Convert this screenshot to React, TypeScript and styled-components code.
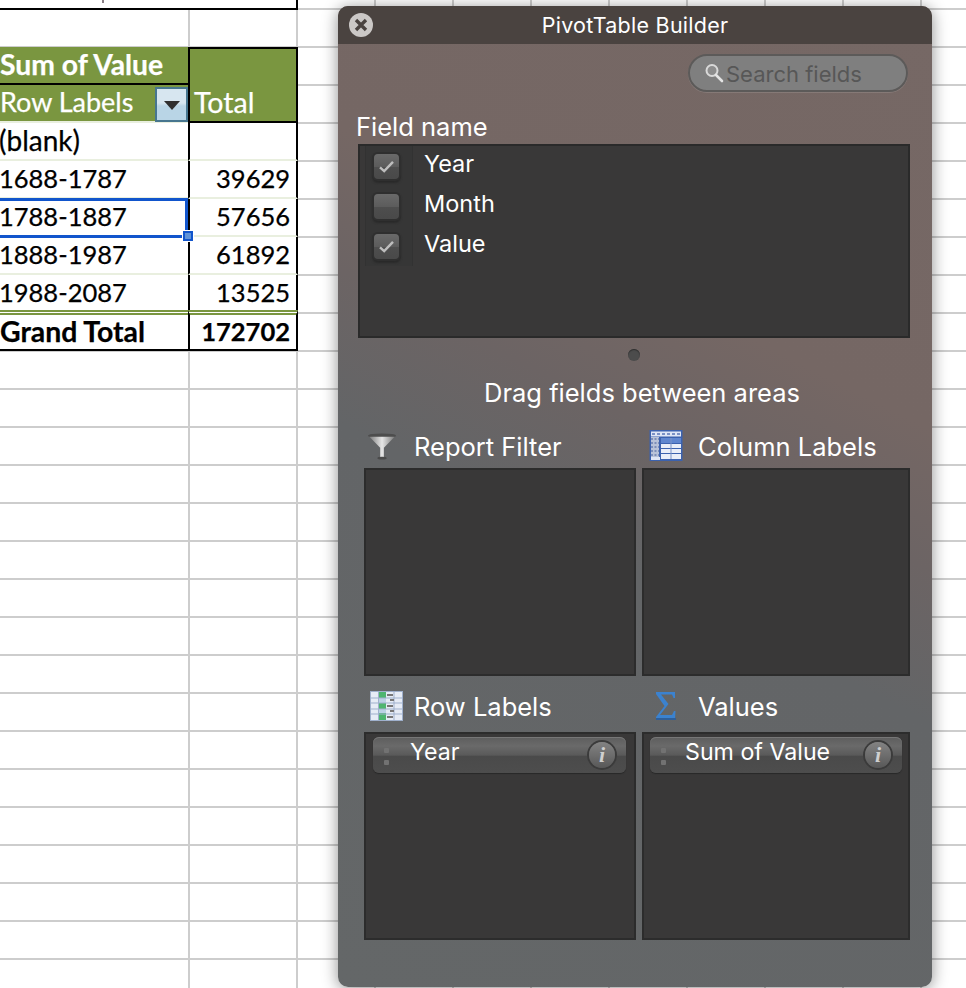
import React from "react";
import styled, { createGlobalStyle } from "styled-components";

const Global = createGlobalStyle`
  html, body { margin: 0; padding: 0; background: #fff; }
  body { width: 966px; height: 988px; overflow: hidden; }
  * { box-sizing: border-box; }
`;

const Sheet = styled.div`
  position: relative;
  width: 966px;
  height: 988px;
  overflow: hidden;
  display: flex;
  align-items: flex-start;
  background-color: #fff;
  background-image:
    linear-gradient(#cdcdcd, #cdcdcd),
    linear-gradient(#cdcdcd, #cdcdcd),
    linear-gradient(to bottom, #cdcdcd 0 2px, transparent 2px);
  background-size: 2px 100%, 2px 100%, 100% 38px;
  background-position: 188px 0, 296px 0, 0 8px;
  background-repeat: no-repeat, no-repeat, repeat-y;
  font-family: "Lato", "Liberation Sans", sans-serif;
  &::before {
    content: "";
    position: absolute;
    left: 374px;
    right: 0;
    top: 0;
    height: 100%;
    background: linear-gradient(to right, #cdcdcd 0 2px, transparent 2px) 0 0 / 78px 100% repeat-x;
  }
`;

const Cells = styled.div`
  position: relative;
  width: 298px;
  flex: none;
  display: flex;
  flex-direction: column;
`;

const CutOffTable = styled.div`
  height: 10px;
  margin-bottom: 37px;
  background: #fff;
  border-right: 2px solid #000;
  border-bottom: 2px solid #000;
  padding-left: 102px;
`;

const Descender = styled.div`
  width: 2px;
  height: 3px;
  background: #8a7f86;
`;

const Row = styled.div<{ $total?: boolean }>`
  display: grid;
  grid-template-columns: 188px 110px;
  height: ${(p) => (p.$total ? "41px" : "38px")};
  margin-top: ${(p) => (p.$total ? "-3px" : "0")};
  font-size: 25.5px;
  color: #000;
  -webkit-text-stroke: 0.25px currentColor;
`;

const Letters = styled.span<{ $size: number }>`
  font-size: ${(p) => p.$size}px;
`;

const LabelCell = styled.div<{ $tone?: "head" | "title" | "total" | "plain"; $selected?: boolean }>`
  position: relative;
  z-index: ${(p) => (p.$selected ? 2 : 0)};
  white-space: nowrap;
  text-indent: ${(p) => (p.$tone === "plain" ? "-1px" : "0")};
  background: ${(p) => (p.$tone === "head" || p.$tone === "title" ? "#7a9640" : "#fff")};
  color: ${(p) => (p.$tone === "head" || p.$tone === "title" ? "#fff" : "#000")};
  font-weight: ${(p) => (p.$tone === "title" || p.$tone === "total" ? 700 : 400)};
  border-bottom: ${(p) =>
    p.$tone === "title" || p.$tone === "total" ? "2px solid #000" : "2px solid #e9efdf"};
  border-top: ${(p) => (p.$tone === "total" ? "5px double #7a9640" : "none")};
  line-height: ${(p) => (p.$tone === "total" ? "32px" : p.$tone === "plain" ? "35px" : "34px")};
`;

const ValueCell = styled.div<{ $tone?: "head" | "headTop" | "total" | "plain" }>`
  text-align: ${(p) => (p.$tone === "head" ? "left" : "right")};
  padding: ${(p) => (p.$tone === "head" ? "0 0 0 4px" : "0 6px 0 0")};
  border-left: 2px solid #000;
  border-right: 2px solid #000;
  background: ${(p) => (p.$tone === "head" || p.$tone === "headTop" ? "#7a9640" : "#fff")};
  color: ${(p) => (p.$tone === "head" ? "#fff" : "#000")};
  font-weight: ${(p) => (p.$tone === "total" ? 700 : 400)};
  border-top: ${(p) =>
    p.$tone === "headTop" ? "2px solid #000" : p.$tone === "total" ? "5px double #7a9640" : "none"};
  border-bottom: ${(p) =>
    p.$tone === "head" || p.$tone === "total"
      ? "2px solid #000"
      : p.$tone === "headTop"
      ? "none"
      : "2px solid #e9efdf"};
  line-height: ${(p) => (p.$tone === "total" ? "32px" : p.$tone === "head" ? "34px" : "35px")};
`;

const FilterButton = styled.div`
  position: absolute;
  right: 0;
  top: 2px;
  width: 33px;
  height: 35px;
  border: 2px solid #47768f;
  background: linear-gradient(#d7e6f0 0 45%, #b9d5e6 55%);
  display: flex;
  align-items: center;
  justify-content: center;
`;

const Arrow = styled.span`
  width: 0;
  height: 0;
  margin-top: 2px;
  border-left: 8px solid transparent;
  border-right: 8px solid transparent;
  border-top: 9px solid #2f2f2f;
`;

const Selection = styled.div`
  position: absolute;
  left: -4px;
  right: 0;
  top: -1px;
  height: 40px;
  border: 3px solid #1155cc;
  pointer-events: none;
`;

const Handle = styled.div`
  position: absolute;
  right: -8px;
  bottom: -6px;
  width: 10px;
  height: 10px;
  background: #5e93d8;
  border: 2px solid #1155cc;
  outline: 1px solid #fff;
`;

const Win = styled.section`
  position: relative;
  width: 594px;
  height: 981px;
  margin: 6px 0 0 40px;
  flex: none;
  border-radius: 10px;
  overflow: hidden;
  display: flex;
  flex-direction: column;
  box-shadow: 0 2px 16px rgba(0, 0, 0, 0.45);
  background: linear-gradient(207deg, #766865 0%, #756764 33%, #6c6464 44%, #636567 56%, #646768 100%);
  font-family: "Inter", "Liberation Sans", sans-serif;
  color: #fff;
`;

const TitleBar = styled.header`
  position: relative;
  flex: none;
  height: 38px;
  background: #4a4340;
  display: flex;
  align-items: center;
  justify-content: center;
  font-size: 21.5px;
  letter-spacing: 0.25px;
`;

const CloseBtn = styled.div`
  position: absolute;
  left: 11px;
  top: 7px;
  width: 24px;
  height: 24px;
  border-radius: 50%;
  background: #cbc8c6;
  display: flex;
  align-items: center;
  justify-content: center;
`;

const Body = styled.div`
  flex: 1;
  display: flex;
  flex-direction: column;
  padding: 10px 22px 0 20px;
`;

const SearchRow = styled.div`
  display: flex;
  justify-content: flex-end;
  height: 38px;
  margin-right: 2px;
`;

const Search = styled.div`
  width: 220px;
  height: 38px;
  border-radius: 19px;
  background: #7f7f7f;
  border: 2px solid #5c5a59;
  box-shadow: 0 1px 0 rgba(255, 255, 255, 0.12);
  display: flex;
  align-items: center;
  padding-left: 14px;
  gap: 2px;
  font-size: 22px;
  color: #575757;
`;

const SearchText = styled.span`
  margin-top: 1px;
`;

const FieldTitle = styled.div`
  margin-top: 20px;
  height: 32px;
  line-height: 30px;
  font-size: 25.5px;
  margin-left: -2px;
`;

const FieldList = styled.div`
  height: 194px;
  background: #393838;
  border: 2px solid #2a2a2a;
  padding: 0 0 0 5px;
`;

const FieldInner = styled.div`
  display: flex;
  flex-direction: column;
`;

const FieldRow = styled.div`
  display: flex;
  align-items: center;
  height: 40px;
  font-size: 23.5px;
`;

const FieldName = styled.span`
  padding-bottom: 6px;
`;

const CheckCell = styled.div`
  width: 48px;
  height: 40px;
  flex: none;
  padding-right: 6px;
  background: #363636;
  border-left: 1px solid #323232;
  border-right: 1px solid #323232;
  display: flex;
  align-items: center;
  justify-content: center;
  margin-right: 11px;
`;

const Check = styled.div`
  width: 25px;
  height: 25px;
  border-radius: 4px;
  background: linear-gradient(#6a6a6a 0%, #5c5c5c 50%, #4e4e4e 52%, #494949 100%);
  box-shadow: 0 0 0 2px #2f2f2f, 0 2px 2px 2px #2a2a2a;
  display: flex;
  align-items: center;
  justify-content: center;
`;

const Dot = styled.div`
  width: 12px;
  height: 12px;
  border-radius: 50%;
  align-self: center;
  margin: 11px 0 0 0;
  background: #4c4c4c;
  box-shadow: inset 0 1px 1px #2e2e2e;
`;

const DragHint = styled.div`
  margin-top: 17px;
  height: 30px;
  text-align: center;
  line-height: 30px;
  font-size: 25.5px;
  margin-right: -16px;
  white-space: nowrap;
`;

const Areas = styled.div`
  display: grid;
  grid-template-columns: 272px 268px;
  column-gap: 6px;
  margin: 20px 0 0 6px;
`;

const Area = styled.div`
  display: flex;
  flex-direction: column;
`;

const AreaHead = styled.div<{ $lower?: boolean }>`
  height: 38px;
  padding-bottom: 2px;
  display: flex;
  align-items: center;
  font-size: 25.5px;
  margin-top: ${(p) => (p.$lower ? "12px" : "0")};
  margin-bottom: ${(p) => (p.$lower ? "6px" : "2px")};
`;

const IconSlot = styled.div<{ $w: number; $pad: number }>`
  width: ${(p) => p.$w}px;
  flex: none;
  display: flex;
  align-items: center;
  padding-left: ${(p) => p.$pad}px;
  margin-top: -1px;
`;

const Drop = styled.div<{ $inset?: number }>`
  height: 208px;
  background: #393838;
  border: 2px solid #2c2c2c;
  padding: 3px ${(p) => p.$inset ?? 8}px 0 ${(p) => p.$inset ?? 7}px;
`;

const Pill = styled.div`
  height: 36px;
  border-radius: 6px;
  background: linear-gradient(#5d5d5d 0%, #6a6a6a 25%, #5a5a5a 50%, #4a4a4a 54%, #4d4d4d 100%);
  box-shadow: 0 1px 1px #282828, inset 0 1px 0 #777;
  display: flex;
  align-items: center;
  font-size: 23.2px;
  padding-right: 11px;
`;

const Grip = styled.div<{ $w: number }>`
  width: ${(p) => p.$w}px;
  flex: none;
  display: flex;
  flex-direction: column;
  gap: 7px;
  padding-left: 11px;
  margin-top: 2px;
  & > i {
    display: block;
    width: 5px;
    height: 5px;
    border-radius: 1px;
    background: #727272;
  }
`;

const PillText = styled.span`
  flex: 1;
  margin-top: -7px;
`;

const Info = styled.div`
  width: 26px;
  height: 26px;
  border-radius: 50%;
  background: linear-gradient(#838383, #585858);
  box-shadow: 0 0 0 2px #3b3b3b;
  display: flex;
  align-items: center;
  justify-content: center;
  font-family: "Liberation Serif", serif;
  font-style: italic;
  font-weight: 700;
  font-size: 22px;
  line-height: 1;
  color: #cfcfcf;
`;

const Tick = () => (
  <svg width="17" height="13" viewBox="0 0 18 14" fill="none">
    <path d="M2 8l4.500 4L16 2" stroke="#bdbdbd" strokeWidth="2.600" />
  </svg>
);

const Funnel = () => (
  <svg width="31" height="28" viewBox="0 0 32 30">
    <defs>
      <linearGradient id="fn" x1="0" x2="1">
        <stop offset="0" stopColor="#7d7d7d" />
        <stop offset="0.5" stopColor="#e6e6e6" />
        <stop offset="1" stopColor="#7b7b7b" />
      </linearGradient>
    </defs>
    <ellipse cx="15.500" cy="4" rx="15" ry="2.500" fill="#4d4d4d" />
    <path d="M2 5h27L17.500 17v10h-4V17z" fill="url(#fn)" />
    <ellipse cx="15.500" cy="28" rx="5" ry="1.500" fill="#4a4a4a" />
  </svg>
);

const ColumnIcon = () => (
  <svg width="34" height="33" viewBox="0 0 34 33">
    <rect x="0.500" y="1" width="33" height="31" fill="#3c62ae" />
    <rect x="2" y="2.500" width="30" height="5" fill="#dfe6f5" />
    <rect x="2" y="8" width="8" height="20" fill="#b9c3d8" />
    <path d="M2 10h8M2 14h8M2 18h8M2 22h8M2 26h8" stroke="#6a7fae" strokeWidth="1.500" strokeDasharray="2 1.500" />
    <path d="M3 5h28" stroke="#5a76b6" strokeWidth="1.500" strokeDasharray="3 2" />
    <rect x="12" y="9" width="20" height="5" fill="#5f86cf" />
    <rect x="12" y="15" width="20" height="4" fill="#e9eef8" />
    <rect x="12" y="20" width="20" height="4" fill="#e9eef8" />
    <rect x="12" y="25" width="20" height="5" fill="#e9eef8" />
    <path d="M22 9v21" stroke="#7b93c7" strokeWidth="1" />
    <rect x="2" y="28" width="9" height="3" fill="#dfe6f5" />
  </svg>
);

const RowIcon = () => (
  <svg width="33" height="30" viewBox="0 0 33 30">
    <rect x="0.500" y="0.500" width="32" height="29" fill="#e6ecf6" stroke="#9fb0cc" />
    <rect x="9" y="1" width="7" height="28" fill="#bcd2e6" />
    <rect x="9" y="1" width="7" height="6" fill="#4eb570" />
    <rect x="9" y="12" width="7" height="6" fill="#4eb570" />
    <rect x="9" y="22" width="7" height="7" fill="#4eb570" />
    <path d="M1 7h31M1 12h31M1 18h31M1 23h31M8.500 1v28M24 1v28" stroke="#9fb0cc" strokeWidth="1" />
    <path d="M17 4h6M17 15h6M17 26h6M20 9h4M20 20h4" stroke="#777" strokeWidth="2" />
  </svg>
);

const SigmaIcon = () => (
  <svg width="24" height="31" viewBox="0 0 24 31">
    <path d="M2 2h19v6h-1.500l-1.500-3.500H7l7.500 9.500L6 25h12l2-4h1.500L21 29H2v-2l8.500-11L2 4z" fill="#3b82cf" />
    <path d="M2 29h20" stroke="#2f5f99" strokeWidth="2" />
  </svg>
);

const Mag = () => (
  <svg width="20" height="22" viewBox="0 0 20 22" fill="none">
    <circle cx="8" cy="8.500" r="5.500" stroke="#d9d9d9" strokeWidth="2" fill="#8d8d8d" />
    <path d="M12 13l6 6" stroke="#e4e4e4" strokeWidth="2.600" strokeLinecap="round" />
  </svg>
);

const rows = [
  { label: "(blank)", value: "", size: 28 },
  { label: "1688-1787", value: "39629" },
  { label: "1788-1887", value: "57656", selected: true },
  { label: "1888-1987", value: "61892" },
  { label: "1988-2087", value: "13525" },
];

const fields: [string, boolean][] = [
  ["Year", true],
  ["Month", false],
  ["Value", true],
];

export default function App() {
  return (
    <Sheet>
      <Global />
      <Cells>
        <CutOffTable>
          <Descender />
        </CutOffTable>
        <Row>
          <LabelCell $tone="title">
            <Letters $size={28.3}>Sum of Value</Letters>
          </LabelCell>
          <ValueCell $tone="headTop" />
        </Row>
        <Row>
          <LabelCell $tone="head">
            <Letters $size={27}>Row Labels</Letters>
            <FilterButton>
              <Arrow />
            </FilterButton>
          </LabelCell>
          <ValueCell $tone="head">
            <Letters $size={28.500}>Total</Letters>
          </ValueCell>
        </Row>
        {rows.map((r) => (
          <Row key={r.label}>
            <LabelCell $tone="plain" $selected={r.selected}>
              {r.size ? <Letters $size={r.size}>{r.label}</Letters> : r.label}
              {r.selected && (
                <Selection>
                  <Handle />
                </Selection>
              )}
            </LabelCell>
            <ValueCell $tone="plain">{r.value}</ValueCell>
          </Row>
        ))}
        <Row $total>
          <LabelCell $tone="total">
            <Letters $size={28.400}>Grand Total</Letters>
          </LabelCell>
          <ValueCell $tone="total">172702</ValueCell>
        </Row>
      </Cells>

      <Win>
        <TitleBar>
          <CloseBtn>
            <svg width="14" height="14" viewBox="0 0 14 14">
              <path d="M2 2l10 10M12 2L2 12" stroke="#4a4340" strokeWidth="3.400" />
            </svg>
          </CloseBtn>
          PivotTable Builder
        </TitleBar>
        <Body>
          <SearchRow>
            <Search>
              <Mag />
              <SearchText>Search fields</SearchText>
            </Search>
          </SearchRow>
          <FieldTitle>Field name</FieldTitle>
          <FieldList>
            <FieldInner>
              {fields.map(([name, on]) => (
                <FieldRow key={name}>
                  <CheckCell>
                    <Check>{on ? <Tick /> : null}</Check>
                  </CheckCell>
                  <FieldName>{name}</FieldName>
                </FieldRow>
              ))}
            </FieldInner>
          </FieldList>
          <Dot />
          <DragHint>Drag fields between areas</DragHint>
          <Areas>
            <Area>
              <AreaHead>
                <IconSlot $w={50} $pad={3}>
                  <Funnel />
                </IconSlot>
                Report Filter
              </AreaHead>
              <Drop />
            </Area>
            <Area>
              <AreaHead>
                <IconSlot $w={56} $pad={7}>
                  <ColumnIcon />
                </IconSlot>
                Column Labels
              </AreaHead>
              <Drop />
            </Area>
            <Area>
              <AreaHead $lower>
                <IconSlot $w={50} $pad={6}>
                  <RowIcon />
                </IconSlot>
                Row Labels
              </AreaHead>
              <Drop>
                <Pill>
                  <Grip $w={37}>
                    <i />
                    <i />
                  </Grip>
                  <PillText>Year</PillText>
                  <Info>i</Info>
                </Pill>
              </Drop>
            </Area>
            <Area>
              <AreaHead $lower>
                <IconSlot $w={56} $pad={12}>
                  <SigmaIcon />
                </IconSlot>
                Values
              </AreaHead>
              <Drop $inset={6}>
                <Pill>
                  <Grip $w={35}>
                    <i />
                    <i />
                  </Grip>
                  <PillText>Sum of Value</PillText>
                  <Info>i</Info>
                </Pill>
              </Drop>
            </Area>
          </Areas>
        </Body>
      </Win>
    </Sheet>
  );
}
